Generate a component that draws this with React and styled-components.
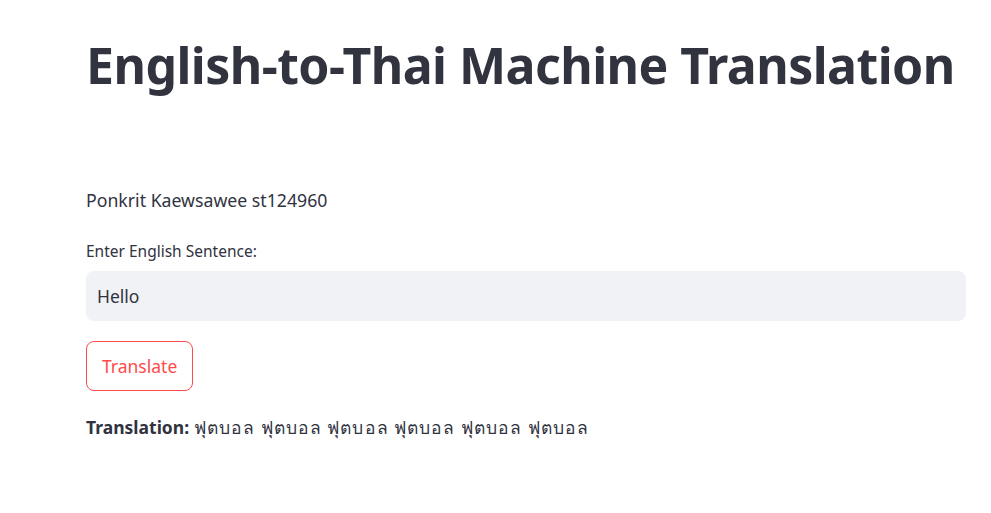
import React from 'react';
import styled, { createGlobalStyle } from 'styled-components';

const GlobalStyle = createGlobalStyle`
  html, body {
    margin: 0;
    padding: 0;
    background: #ffffff;
  }
  body {
    font-family: "Noto Sans", "Open Sans", sans-serif;
    color: #31333f;
  }
`;

const Page = styled.main`
  width: 991px;
  height: 513px;
  box-sizing: border-box;
  padding: 29px 25px 0 86px;
  display: flex;
  flex-direction: column;
`;

const Title = styled.h1`
  margin: 0;
  font-size: 50px;
  font-weight: 700;
  line-height: 72px;
  letter-spacing: -0.55px;
  color: #31333f;
`;

const Author = styled.p`
  margin: 86px 0 0;
  font-size: 17.7px;
  line-height: 26px;
`;

const Field = styled.div`
  display: flex;
  flex-direction: column;
  gap: 9px;
  margin-top: 27px;
`;

const Label = styled.label`
  font-size: 15.5px;
  line-height: 22px;
`;

const Input = styled.input`
  box-sizing: border-box;
  height: 50px;
  width: 100%;
  border: none;
  outline: none;
  border-radius: 8px;
  background: #f0f2f6;
  padding: 0 11px;
  font-family: inherit;
  font-size: 17.5px;
  color: #31333f;
`;

const Button = styled.button`
  align-self: flex-start;
  margin-top: 20px;
  height: 50px;
  padding: 0 15px;
  border: 1px solid #ff4b4b;
  border-radius: 8px;
  background: #ffffff;
  color: #ff4b4b;
  font-family: inherit;
  font-size: 17.5px;
  cursor: pointer;
`;

const Result = styled.p`
  margin: 23px 0 0;
  font-size: 17.5px;
  line-height: 26px;

  strong {
    font-weight: 700;
  }
`;

const Thai = styled.span`
  letter-spacing: 1.05px;
`;

export default function App() {
  return (
    <>
      <GlobalStyle />
      <Page>
        <Title>English-to-Thai Machine Translation</Title>
        <Author>Ponkrit Kaewsawee st124960</Author>
        <Field>
          <Label htmlFor="sentence">Enter English Sentence:</Label>
          <Input id="sentence" defaultValue="Hello" />
        </Field>
        <Button type="button">Translate</Button>
        <Result>
          <strong>Translation:</strong> <Thai>ฟุตบอล ฟุตบอล ฟุตบอล ฟุตบอล ฟุตบอล ฟุตบอล</Thai>
        </Result>
      </Page>
    </>
  );
}
